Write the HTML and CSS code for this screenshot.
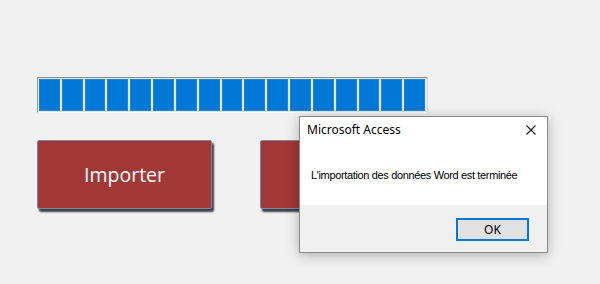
FILE: index.html
```html
<!DOCTYPE html>
<html lang="fr">
<head>
    <meta charset="UTF-8">
    <title>Importation Word</title>
    <link rel="stylesheet" href="styles.css">
</head>
<body>
    <!-- Formulaire -->
    <div class="form">
        <div class="progress">
            <div class="block"></div>
            <div class="block"></div>
            <div class="block"></div>
            <div class="block"></div>
            <div class="block"></div>
            <div class="block"></div>
            <div class="block"></div>
            <div class="block"></div>
            <div class="block"></div>
            <div class="block"></div>
            <div class="block"></div>
            <div class="block"></div>
            <div class="block"></div>
            <div class="block"></div>
            <div class="block"></div>
            <div class="block"></div>
            <div class="block"></div>
        </div>

        <div class="buttons">
            <div class="btn">Importer</div>
            <div class="btn"></div>
        </div>
    </div>

    <!-- Boite de message -->
    <div class="msgbox">
        <div class="msgbox-title">
            <span>Microsoft Access</span>
            <svg class="close" width="10" height="10" viewBox="0 0 10 10">
                <path d="M0.5 0.5 L9.5 9.5 M9.5 0.5 L0.5 9.5" stroke="#1a1a1a" stroke-width="1.1" fill="none"/>
            </svg>
        </div>
        <div class="msgbox-text">L'importation des données Word est terminée</div>
        <div class="msgbox-footer">
            <div class="ok">OK</div>
        </div>
    </div>
</body>
</html>
```

FILE: styles.css
```css
body {
    margin: 0;
    background: #f1f1f1;
    font-family: 'Open Sans', sans-serif;
    width: 600px;
    height: 284px;
    overflow: hidden;
    position: relative;
}

.form {
    padding: 77px 0 0 37px;
}

.progress {
    width: 391px;
    height: 36px;
    box-sizing: border-box;
    display: flex;
    gap: 2px;
    padding: 1px 2px 1px 1px;
    background: #e8e8e8;
    border-top: 1px solid #8c8c8c;
    border-left: 1px solid #9a9a9a;
    border-right: 1px solid #dcdcdc;
    border-bottom: 1px solid #fbfbfb;
}

.block {
    flex: 1;
    background: #0078d7;
    box-shadow: inset 0 0 0 1px #1c86da;
}

.buttons {
    display: flex;
    gap: 48px;
    margin-top: 27px;
}

.btn {
    width: 175px;
    height: 69px;
    box-sizing: border-box;
    background: #a13836;
    border: 1px solid #7d86ab;
    border-radius: 2px;
    box-shadow: 2px 3px 2px rgba(30, 30, 40, 0.85);
    color: #ffffff;
    font-size: 19.5px;
    display: flex;
    align-items: center;
    justify-content: center;
}

.msgbox {
    position: absolute;
    left: 299px;
    top: 116px;
    width: 249px;
    height: 137px;
    box-sizing: border-box;
    background: #ffffff;
    border: 1px solid #8a8a8a;
    box-shadow: 0 2px 12px rgba(0, 0, 0, 0.28);
    display: flex;
    flex-direction: column;
    font-family: 'Noto Sans', sans-serif;
    color: #000000;
}

.msgbox-title {
    height: 30px;
    box-sizing: border-box;
    padding: 5px 11px 0 7px;
    display: flex;
    justify-content: space-between;
    align-items: flex-start;
    font-size: 12px;
    line-height: 16px;
}

.close {
    margin-top: 3px;
}

.msgbox-text {
    flex: 1;
    padding: 20px 0 0 11px;
    font-family: 'Liberation Sans', sans-serif;
    font-size: 11px;
    letter-spacing: -0.35px;
    line-height: 16px;
    white-space: nowrap;
}

.msgbox-footer {
    height: 47px;
    box-sizing: border-box;
    background: #f0f0f0;
    display: flex;
    justify-content: flex-end;
    padding: 13px 18px 0 0;
}

.ok {
    width: 73px;
    height: 23px;
    box-sizing: border-box;
    background: #e1e1e1;
    border: 1px solid #0078d7;
    box-shadow: inset 0 0 0 1px #0078d7;
    display: flex;
    align-items: center;
    justify-content: center;
    font-size: 12px;
}
```
